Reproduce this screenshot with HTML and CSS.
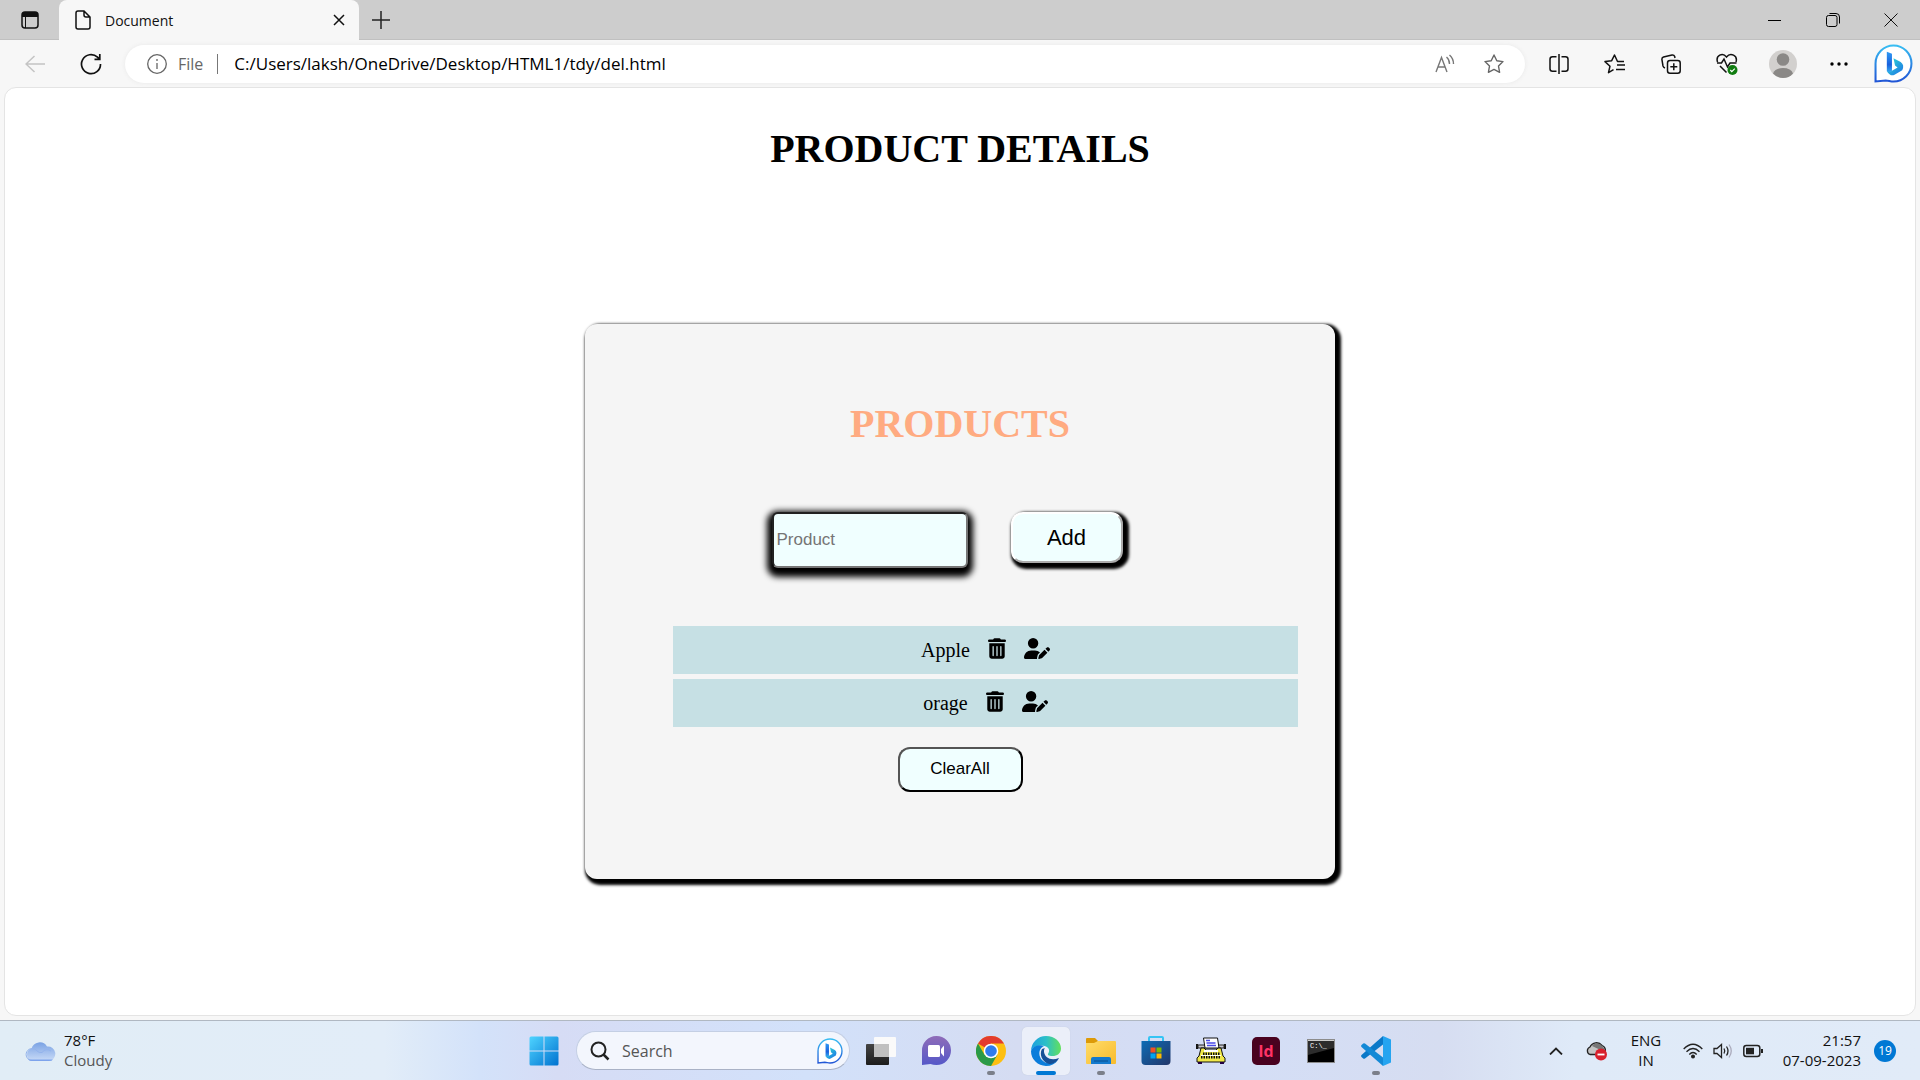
FILE: index.html
```html
<!DOCTYPE html>
<html lang="en">
<head>
<meta charset="utf-8">
<title>Document</title>
<link rel="stylesheet" href="styles.css">
</head>
<body>
<svg class="defs" width="0" height="0" aria-hidden="true">
  <defs>
    <linearGradient id="bingEdge" x1="0" y1="0" x2="0" y2="1"><stop offset="0" stop-color="#38bdf2"/><stop offset="1" stop-color="#2156d6"/></linearGradient>
    <linearGradient id="bingStem" x1="0" y1="0" x2="0" y2="1"><stop offset="0" stop-color="#2f9bf5"/><stop offset=".6" stop-color="#1a60dc"/><stop offset="1" stop-color="#38b6f5"/></linearGradient>
    <linearGradient id="bingBowl" x1="0" y1="0" x2="1" y2="1"><stop offset="0" stop-color="#2fe0d0"/><stop offset="1" stop-color="#1c6fe8"/></linearGradient>
    <linearGradient id="win" x1="0" y1="0" x2="1" y2="1"><stop offset="0" stop-color="#4fd4ff"/><stop offset="1" stop-color="#0072d0"/></linearGradient>
    <linearGradient id="cloud" x1="0" y1="0" x2="0" y2="1"><stop offset="0" stop-color="#7aa2e4"/><stop offset="1" stop-color="#c9dbf7"/></linearGradient>
    <linearGradient id="chat" x1="0" y1="0" x2="0" y2="1"><stop offset="0" stop-color="#8f6cb8"/><stop offset="1" stop-color="#5558c8"/></linearGradient>
    <linearGradient id="edgeTop" x1="0" y1="0" x2="1" y2="0"><stop offset="0" stop-color="#1c9fe0"/><stop offset=".5" stop-color="#2bbfc8"/><stop offset="1" stop-color="#63e05c"/></linearGradient>
    <linearGradient id="folder" x1="0" y1="0" x2="1" y2="1"><stop offset="0" stop-color="#ffdc6a"/><stop offset="1" stop-color="#f8bb2c"/></linearGradient>
    <linearGradient id="store" x1="0" y1="0" x2="1" y2="1"><stop offset="0" stop-color="#0d6cb5"/><stop offset="1" stop-color="#22366a"/></linearGradient>
    <linearGradient id="dark" x1="0" y1="0" x2="0" y2="1"><stop offset="0" stop-color="#444"/><stop offset="1" stop-color="#1c1c1c"/></linearGradient>
    <symbol id="bing" viewBox="0 0 38 38">
      <path d="M1.5 36.5V19A17.5 17.5 0 1 1 19 36.5c-3 0-5-1-7.500-1z" fill="#fff" stroke="url(#bingEdge)" stroke-width="2"/>
      <path d="M12.500 7.500l5 2v16.500l-2.500 2.500-2.500-2z" fill="url(#bingStem)"/>
      <path d="M19 14l7 3.500q4 3 1.500 8L20 30q-4 2-7.500-3.500l2.500 1 8-4.500-2.500-2z" fill="url(#bingBowl)"/>
    </symbol>
    <symbol id="trash" viewBox="0 0 448 512"><path d="M135.200 17.700L128 32H32C14.300 32 0 46.300 0 64S14.300 96 32 96H416c17.700 0 32-14.300 32-32s-14.300-32-32-32H320l-7.200-14.300C307.400 6.800 296.300 0 284.200 0H163.800c-12.100 0-23.200 6.800-28.600 17.700zM416 128H32V448c0 35.300 28.700 64 64 64H352c35.300 0 64-28.700 64-64V128zM144 208V432c0 8.800-7.200 16-16 16s-16-7.200-16-16V208c0-8.800 7.200-16 16-16s16 7.200 16 16zm96 0V432c0 8.800-7.200 16-16 16s-16-7.200-16-16V208c0-8.800 7.200-16 16-16s16 7.200 16 16zm96 0V432c0 8.800-7.200 16-16 16s-16-7.200-16-16V208c0-8.800 7.200-16 16-16s16 7.200 16 16z"/></symbol>
    <symbol id="userpen" viewBox="0 0 640 512"><path d="M224 256A128 128 0 1 0 224 0a128 128 0 1 0 0 256zm-45.700 48C79.800 304 0 383.800 0 482.300C0 498.700 13.300 512 29.700 512H322.800c-3.100-8.800-3.700-18.400-1.400-27.800l15-60.100c2.800-11.300 8.600-21.500 16.800-29.700l40.300-40.300c-32.100-31-75.700-50.100-123.900-50.100H178.300zm435.500-68.300c-15.600-15.600-40.900-15.600-56.600 0l-29.400 29.400 71 71 29.400-29.400c15.600-15.600 15.600-40.900 0-56.600l-14.400-14.400zM375.900 417c-4.100 4.100-7 9.200-8.400 14.900l-15 60.100c-1.400 5.500 .2 11.200 4.200 15.200s9.700 5.600 15.200 4.200l60.100-15c5.600-1.400 10.800-4.300 14.900-8.400L576.100 358.700l-71-71L375.900 417z"/></symbol>
  </defs>
</svg>

<header class="browser">
  <div class="tabstrip">
    <button class="tab-menu" aria-label="Tab actions"><svg width="18" height="18" viewBox="0 0 18 18"><rect x="1" y="1" width="16" height="16" rx="3" fill="none" stroke="#111" stroke-width="1.500"/><path d="M1 6V4q0-3 3-3h10q3 0 3 3v2z" fill="#111"/><path d="M4.500 6v11" stroke="#111"/></svg></button>
    <div class="tab">
      <svg width="16" height="20" viewBox="0 0 16 20" fill="none" stroke="#111" stroke-width="1.500"><path d="M3 1h6l6 6v10q0 2-2 2H3q-2 0-2-2V3q0-2 2-2zM9 1v4q0 2 2 2h4"/></svg>
      <span class="tab-title">Document</span>
      <button class="tab-close" aria-label="Close tab"><svg width="12" height="12" viewBox="0 0 12 12" stroke="#111" stroke-width="1.500"><path d="M1 1l10 10M11 1L1 11"/></svg></button>
    </div>
    <button class="new-tab" aria-label="New tab"><svg width="18" height="18" viewBox="0 0 18 18" stroke="#222" stroke-width="1.500"><path d="M9 0v18M0 9h18"/></svg></button>
    <div class="window-controls">
      <button aria-label="Minimize"><svg width="14" height="14" viewBox="0 0 14 14"><path d="M0 7.500h13" stroke="#000"/></svg></button>
      <button aria-label="Restore"><svg width="14" height="14" viewBox="0 0 14 14" fill="none" stroke="#000"><rect x=".5" y="2.500" width="10.500" height="11" rx="2"/><path d="M3.500 .5H10q3.500 0 3.500 3.500v6.500"/></svg></button>
      <button aria-label="Close"><svg width="14" height="14" viewBox="0 0 14 14" stroke="#111"><path d="M.5.5l13 13M13.500.5l-13 13"/></svg></button>
    </div>
  </div>

  <div class="toolbar">
    <button class="tool" aria-label="Back"><svg width="20" height="18" viewBox="0 0 20 18" fill="none" stroke="#c4c4c4" stroke-width="1.500"><path d="M20 9H1M9.500 1L1 9l8.500 8"/></svg></button>
    <button class="tool" aria-label="Refresh"><svg width="22" height="22" viewBox="0 0 22 22" fill="none" stroke="#111" stroke-width="1.700"><path d="M20.500 11A9.500 9.500 0 1 1 17.500 4.200L19.500 6M19.800 1v5.300h-5.300"/></svg></button>
    <div class="address">
      <svg width="20" height="20" viewBox="0 0 20 20" fill="none" stroke="#666" stroke-width="1.300"><circle cx="10" cy="10" r="9.300"/><path d="M10 9v6M10 5v2"/></svg>
      <span class="scheme">File</span>
      <span class="divider"></span>
      <input class="url" type="text" aria-label="Address" value="C:/Users/laksh/OneDrive/Desktop/HTML1/tdy/del.html">
      <button class="address-tool" aria-label="Read aloud"><svg width="20" height="20" viewBox="0 0 20 20" fill="none" stroke="#777" stroke-width="1.400"><path d="M1 18L6.500 3.500 12 18M3 13h7M11.500 3q3 2.500 3 7M14.500 1q4 3.500 4 9"/></svg></button>
      <button class="address-tool" aria-label="Add to favorites"><svg width="20" height="20" viewBox="0 0 20 20" fill="none" stroke="#666" stroke-width="1.400" stroke-linejoin="round"><path d="M10 1l2.800 5.700 6.200.9-4.500 4.400 1.100 6.300L10 15.400l-5.600 2.900L5.500 12 1 7.600l6.200-.9z"/></svg></button>
    </div>
    <div class="tools">
      <button class="tool" aria-label="Split screen"><svg width="20" height="20" viewBox="0 0 20 20" fill="none" stroke="#111" stroke-width="1.500"><path d="M10 0v20M7.500 2.800H3.500q-2.500 0-2.500 2.500v9.400q0 2.500 2.500 2.500h4M12.500 2.800h4q2.500 0 2.500 2.500v9.400q0 2.500-2.500 2.500h-4"/></svg></button>
      <button class="tool" aria-label="Favorites"><svg width="22" height="20" viewBox="0 0 22 20" fill="none" stroke="#111" stroke-width="1.500" stroke-linejoin="round"><path d="M20 7.500h-6.500L10.500 1 7.700 6.700 1 7.600l5 4.600-1.500 6.500 5-3M13 11h8M12 15.500h9"/></svg></button>
      <button class="tool" aria-label="Collections"><svg width="20" height="20" viewBox="0 0 20 20" fill="none" stroke="#111" stroke-width="1.500"><path d="M4 14Q2.500 13.500 2 12L.9 5.500Q.8 3.500 2.500 3L11 1q2-.3 2.700 1.500L14 4"/><rect x="6.500" y="6.500" width="12.700" height="12.700" rx="2.500"/><path d="M12.800 9.300v7M9.300 12.800h7"/></svg></button>
      <button class="tool" aria-label="Browser essentials"><svg width="22" height="22" viewBox="0 0 22 22" fill="none" stroke="#111" stroke-width="1.500"><path d="M1.500 9C-.5 2.500 6.500-1 10.500 4c4-5 11.500-1.500 9.500 5M4 13l6.500 6.500M1 10h4.500l2.500-4 3.500 8 2.500-4h6.500"/><circle cx="16.500" cy="17" r="5" fill="#107c10" stroke="none"/><path d="M14.300 17l1.500 1.600 3-3" stroke="#fff" stroke-width="1.200"/></svg></button>
      <button class="tool" aria-label="Profile"><svg width="28" height="30" viewBox="0 0 28 30"><circle cx="14" cy="15" r="14" fill="#d2d0ce"/><circle cx="14" cy="10.500" r="6.300" fill="#8a8886"/><path d="M4 24.500q2-5.500 10-5.500t10 5.500q-4 4.500-10 4.500T4 24.500z" fill="#8a8886"/></svg></button>
      <button class="tool" aria-label="Settings and more"><svg width="18" height="4" viewBox="0 0 18 4"><circle cx="2" cy="2" r="1.700"/><circle cx="9" cy="2" r="1.700"/><circle cx="16" cy="2" r="1.700"/></svg></button>
      <button class="tool tool-bing" aria-label="Bing"><svg width="39" height="39"><use href="#bing"/></svg></button>
    </div>
  </div>
</header>

<main class="page">
  <h1>PRODUCT DETAILS</h1>
  <section class="card">
    <h2>PRODUCTS</h2>
    <form class="entry">
      <input class="product-input" type="text" placeholder="Product" aria-label="Product">
      <button class="add" type="button">Add</button>
    </form>
    <ul class="products">
      <li><span>Apple</span><button aria-label="Delete Apple"><svg width="18" height="21"><use href="#trash"/></svg></button><button aria-label="Edit Apple"><svg width="26" height="21"><use href="#userpen"/></svg></button></li>
      <li><span>orage</span><button aria-label="Delete orage"><svg width="18" height="21"><use href="#trash"/></svg></button><button aria-label="Edit orage"><svg width="26" height="21"><use href="#userpen"/></svg></button></li>
    </ul>
    <button class="clear" type="button">ClearAll</button>
  </section>
</main>

<footer class="taskbar">
  <button class="weather">
    <svg width="31" height="22" viewBox="0 0 31 22"><path d="M7 21a6.500 6.500 0 0 1-.5-12.500A8.500 8.500 0 0 1 22 6.500 7.300 7.300 0 0 1 24 21z" fill="url(#cloud)"/><path d="M7 20.500a6 6 0 1 1 5-9.500q2 2 5 1.500 4-5 9-1.500" fill="none" stroke="#93b3ec"/><path d="M3 19.500q2 1.500 4 1.500h17q3 0 4-1.500z" fill="#7da3ec"/></svg>
    <span class="weather-text"><span>78°F</span><span class="muted">Cloudy</span></span>
  </button>

  <nav class="apps" aria-label="Taskbar">
    <button class="app" aria-label="Start"><svg width="30" height="30" viewBox="0 0 30 30"><path fill="url(#win)" d="M2 .5h12.500v14H.5V2Q.5.500 2 .5zM15.500.5H28q1.500 0 1.500 1.500v12.500h-14zM.5 15.500h14v14H2Q.5 29.500.5 28zM15.500 15.500h14V28q0 1.500-1.500 1.500H15.500z"/></svg></button>
    <div class="search">
      <svg width="20" height="20" viewBox="0 0 20 20" fill="none" stroke="#222"><circle cx="8.500" cy="8.500" r="7" stroke-width="2"/><path d="M13.500 13.500l5 5" stroke-width="2.500"/></svg>
      <input type="text" placeholder="Search" aria-label="Search">
      <svg width="26" height="26"><use href="#bing"/></svg>
    </div>
    <button class="app" aria-label="Task view"><svg width="30" height="28" viewBox="0 0 30 28"><rect y="7" width="23" height="21" rx="1" fill="url(#dark)"/><rect x="8" width="22" height="20" rx="1" fill="#fafafa"/><path d="M8 7h15v13H8z" fill="#c0c0c0"/></svg></button>
    <button class="app" aria-label="Chat"><svg width="30" height="30" viewBox="0 0 30 30"><path d="M1 29V15A14.500 14.500 0 1 1 15.500 29q-3.500 0-6-1z" fill="url(#chat)"/><rect x="7" y="9" width="12" height="12" rx="1.500" fill="#fff"/><path d="M20 13l3-3.500v11L20 17z" fill="#fff"/></svg></button>
    <button class="app running" aria-label="Chrome"><svg width="30" height="30" viewBox="0 0 30 30"><circle cx="15" cy="15" r="15" fill="#fdbf11"/><path d="M15 15L2 7.500A15 15 0 0 1 28 7.500H15z" fill="#e33b2e"/><path d="M2 7.500A15 15 0 0 0 15 30l6.500-11.500L15 15 8.500 18.800z" fill="#2a9a48"/><circle cx="15" cy="15" r="7.300" fill="#fff"/><circle cx="15" cy="15" r="5.800" fill="#2f7cec"/></svg></button>
    <button class="app active" aria-label="Edge"><svg width="30" height="30" viewBox="0 0 30 30"><path d="M0 15A15 15 0 0 1 15 0c9 0 15 6 15 12.500 0 5-4 7.500-8.500 7.500-4 0-5.500-1-4-3 1.500-2.500.5-6-4-7C7 8.500 2 11 0 15z" fill="url(#edgeTop)"/><path d="M0 15C2 10 8 8 13 10c-5 2-6 8-3 13 4 5 11 6 17 1-3 4-7 6-12 6A15 15 0 0 1 0 15z" fill="#0b7ddb"/><path d="M11 13c-3 5 0 13 7 15 4 0 8-2 10-6-8 3-14 0-15-6 0-2 0-3 1-4z" fill="#154f97"/></svg></button>
    <button class="app running" aria-label="File Explorer"><svg width="30" height="28" viewBox="0 0 30 28"><path d="M0 10V2q0-1 1-1h8l3 3-4 6z" fill="#dd9a08"/><path d="M0 6h8l4-2h17q1 0 1 1v21q0 1-1 1H1q-1 0-1-1z" fill="url(#folder)"/><path d="M5 27v-5q0-2 2-2h16q2 0 2 2v5z" fill="#1479cd"/><path d="M8 24h14" stroke="#074f8e"/></svg></button>
    <button class="app" aria-label="Microsoft Store"><svg width="30" height="30" viewBox="0 0 30 30"><path d="M8 6V2q0-1 1-1h12q1 0 1 1v4" fill="none" stroke="#35c4f4" stroke-width="2"/><path d="M.5 5h29v20q0 4-4 4h-21q-4 0-4-4z" fill="url(#store)"/><path d="M9.500 11.500h5v5h-5z" fill="#f25022"/><path d="M15.500 11.500h5v5h-5z" fill="#7fba00"/><path d="M9.500 17.500h5v5h-5z" fill="#00a4ef"/><path d="M15.500 17.500h5v5h-5z" fill="#ffb900"/></svg></button>
    <button class="app" aria-label="Typewriter"><svg width="30" height="27" viewBox="0 0 30 27"><path d="M1 7v5M29 7v5" stroke="#111" stroke-width="2"/><path d="M2 8h26v3H2z" fill="#c8c8d0" stroke="#222"/><path d="M7.500 1h14l1.500 10H9z" fill="#fff" stroke="#111"/><path d="M10 3.500h4M10.500 6h9M11 8.500h9" stroke="#4a4ae6" stroke-width="1.300"/><path d="M5 11h3l2 2h10l2-2h3l2 8 2 2v4H1v-4l2-2z" fill="#f0e84a" stroke="#111"/><path d="M8 14h14" stroke="#fff" stroke-width="2"/><path d="M7 17h17M5 20h20" stroke="#111" stroke-width="3" stroke-dasharray="1.500 1"/><path d="M5 18.500h20" stroke="#fff"/><path d="M2 26h4M24 26h4" stroke="#204" stroke-width="2"/></svg></button>
    <button class="app" aria-label="InDesign"><svg width="28" height="28" viewBox="0 0 28 28"><rect width="28" height="28" rx="5" fill="#49021f"/><text x="14" y="20" class="id-glyph">Id</text></svg></button>
    <button class="app" aria-label="Command Prompt"><svg width="28" height="24" viewBox="0 0 28 24"><rect x=".5" y=".5" width="27" height="23" fill="#000" stroke="#8c8c8c"/><path d="M1 1h26v8L1 16z" fill="#2c2c2c"/><path d="M1 1.500h26" stroke="#ccc"/><text x="3" y="9" class="cmd-glyph">C:\_</text></svg></button>
    <button class="app running" aria-label="Visual Studio Code"><svg width="30" height="30" viewBox="0 0 30 30"><path d="M22 0l8 3.500v23L22 30z" fill="#25a4f0"/><path d="M22 0v8.500L4 22.500q-1 .7-1.800 0L.5 21q-.8-1 0-2z" fill="#0a78c8"/><path d="M22 30v-8.500L4 7.500q-1-.7-1.800 0L.5 9q-.8 1 0 2z" fill="#1389d6"/></svg></button>
  </nav>

  <div class="tray">
    <button class="tray-chevron" aria-label="Show hidden icons"><svg width="14" height="8" viewBox="0 0 14 8" fill="none" stroke="#222" stroke-width="1.800"><path d="M1 7.500l6-6 6 6"/></svg></button>
    <button class="tray-cloud" aria-label="OneDrive"><svg width="22" height="20" viewBox="0 0 22 20"><path d="M4 13.500a4 4 0 0 1 0-7.500 7 7 0 0 1 12-1.500 5 5 0 0 1 1 9z" fill="#c4c4c4" stroke="#222" stroke-width="1.300"/><path d="M6 5a6 6 0 0 1 10 0q3 2 3 6z" fill="#777"/><circle cx="15" cy="13.500" r="6" fill="#d9202c"/><path d="M11.500 13.500h7" stroke="#fff" stroke-width="1.800"/></svg></button>
    <button class="language"><span>ENG</span><span>IN</span></button>
    <button class="status" aria-label="Network, volume and battery">
      <svg width="20" height="16" viewBox="0 0 20 16" fill="none" stroke="#222" stroke-width="1.400"><path d="M.7 6q9.300-9.500 18.600 0M3.500 8.700q6.500-6.500 13 0M6.300 11.400q3.700-3.700 7.400 0"/><circle cx="10" cy="13.500" r="1.300" fill="#222"/></svg>
      <svg width="20" height="16" viewBox="0 0 20 16" fill="none" stroke="#222" stroke-width="1.300"><path d="M1 5.500h3L8.500 1.500v13L4 10.500H1zM11 5.500q1.500 2.500 0 5M13.500 3.500q3 4.500 0 9"/><path d="M16 1.500q4.500 6.500 0 13" stroke="#aab"/></svg>
      <svg width="20" height="14" viewBox="0 0 20 14"><rect x=".8" y="1.500" width="16" height="11" rx="2.500" fill="none" stroke="#222" stroke-width="1.500"/><rect x="3" y="3.800" width="8" height="6.500" fill="#222"/><path d="M18 5h2v4h-2z" fill="#222"/></svg>
    </button>
    <button class="clock"><span>21:57</span><span>07-09-2023</span></button>
    <button class="badge">19</button>
  </div>
</footer>
</body>
</html>
```
FILE: styles.css
```css
* { box-sizing: border-box; }

body {
  margin: 0;
  min-height: 100vh;
  display: flex;
  flex-direction: column;
  background: #f7f7f7;
  font-family: "Open Sans", "Noto Sans", sans-serif;
  font-size: 14px;
  color: #111;
}

.defs { position: absolute; }

button {
  margin: 0;
  padding: 0;
  border: 0;
  background: none;
  color: inherit;
  font: inherit;
}

svg { display: block; flex: none; }

input { min-width: 0; outline: 0; }

/* Tab strip */
.tabstrip {
  display: flex;
  height: 40px;
  background: #cdcdcd;
  border-bottom: 1px solid #c0c0c0;
}

.tab-menu, .new-tab, .tab-close {
  display: flex;
  align-items: center;
  justify-content: center;
}

.tab-menu { width: 59px; }

.new-tab { width: 43px; }

.tab {
  display: flex;
  align-items: center;
  gap: 14px;
  width: 300px;
  height: 40px;
  padding: 0 8px 0 16px;
  border-radius: 8px 8px 0 0;
  background: #f7f7f7;
}

.tab-title { flex: 1; }

.tab-close { width: 24px; height: 24px; }

.window-controls { display: flex; margin-left: auto; }

.window-controls button {
  display: flex;
  align-items: center;
  justify-content: center;
  width: 58px;
}

/* Toolbar */
.toolbar {
  display: flex;
  align-items: center;
  gap: 6px;
  height: 47px;
  padding-left: 7px;
}

.tool {
  display: flex;
  align-items: center;
  justify-content: center;
  width: 56px;
  height: 40px;
}

.toolbar > .tool + .tool { margin-left: -6px; }

.tool-bing { width: 53px; }

.tools { display: flex; }

.address {
  display: flex;
  align-items: center;
  flex: 1;
  height: 38px;
  padding: 0 7px 0 22px;
  border-radius: 19px;
  background: #fff;
  box-shadow: 0 0 4px #e8e8e8;
}

.scheme {
  margin-left: 11px;
  font-size: 16px;
  color: #666;
}

.divider {
  width: 1px;
  height: 20px;
  margin: 0 16px 0 14px;
  background: #777;
}

.url {
  flex: 1;
  padding: 0;
  border: 0;
  background: none;
  font: inherit;
  font-size: 17px;
  color: #000;
}

.address-tool {
  display: flex;
  align-items: center;
  justify-content: center;
  width: 49px;
}

/* Web page */
.page {
  flex: 1;
  margin: 0 4px 4px;
  padding: 38px 0 135px;
  border: 1px solid #e4e4e4;
  border-radius: 12px;
  background: #fff;
  font-family: "Liberation Serif", "Times New Roman", serif;
  font-size: 20px;
  color: #000;
}

.page h1, .page h2 {
  margin: 0;
  font-size: 40px;
  line-height: 46px;
  text-align: center;
}

.card {
  display: flex;
  flex-direction: column;
  align-items: center;
  max-width: 750px;
  margin: 152px auto 0;
  padding: 77px 37px 87px;
  border-radius: 12px;
  background: #f5f5f5;
  box-shadow: 3px 3px 3px 3px #000;
}

.card h2 { color: #ffab81; }

.entry {
  display: flex;
  align-items: flex-start;
  gap: 43px;
  margin: 65px 0 58px;
  padding-right: 26px;
}

.product-input {
  width: 196px;
  height: 56px;
  padding: 0 3px;
  border: 2px inset #767676;
  border-radius: 6px;
  background: #f0ffff;
  box-shadow: 0 4px 6px 5px #000;
  font-family: "Liberation Sans", Arial, sans-serif;
  font-size: 17px;
}

.product-input::placeholder { color: #757575; }

.add, .clear {
  background: #f0ffff;
  font-family: "Liberation Sans", Arial, sans-serif;
}

.add {
  width: 112px;
  height: 51px;
  border: 2px outset #fff;
  border-radius: 12px;
  box-shadow: 3px 3px 3px 3px #000;
  font-size: 22px;
}

.products {
  display: flex;
  flex-direction: column;
  gap: 5px;
  align-self: stretch;
  margin: 0 0 20px 51px;
  padding: 0;
  list-style: none;
}

.products li {
  display: flex;
  align-items: center;
  justify-content: center;
  gap: 18px;
  height: 48px;
  background: #c6e0e4;
}

.products button { padding-bottom: 4px; }

.clear {
  width: 125px;
  height: 45px;
  padding-bottom: 2px;
  border: 2px outset #000;
  border-radius: 12px;
  font-size: 17px;
}

/* Taskbar */
.taskbar {
  display: grid;
  grid-template-columns: 1fr auto 1fr;
  align-items: center;
  height: 60px;
  border-top: 1px solid #b0b8c2;
  background: linear-gradient(90deg, #e1edf6, #e2edf8 20%, #d3e2fa 25%, #d6dcf5 29%, #d2e1fa 42%, #d5dcf2 53%, #d4def6 65%, #d6ddf1 75%, #dfeaf8 82%, #e1ebf8);
}

.weather {
  display: flex;
  align-items: center;
  justify-self: start;
  gap: 8px;
  padding-left: 25px;
  text-align: left;
}

.weather-text, .language, .clock {
  display: flex;
  flex-direction: column;
  padding-bottom: 2px;
  font-size: 15px;
  line-height: 20px;
}

.muted { color: #555; }

.apps {
  display: flex;
  align-items: center;
  gap: 7px;
}

.app {
  position: relative;
  display: flex;
  align-items: center;
  justify-content: center;
  width: 48px;
  height: 48px;
  border-radius: 5px;
}

.app.active {
  background: #ebeff9;
  box-shadow: 0 0 1px #b8c0d0;
}

.app.running::after, .app.active::after {
  content: "";
  position: absolute;
  bottom: 0;
  width: 8px;
  height: 4px;
  border-radius: 2px;
  background: #7b7f8a;
}

.app.active::after { width: 20px; background: #0078d4; }

.search {
  display: flex;
  align-items: center;
  width: 274px;
  height: 39px;
  margin-left: 1px;
  padding: 0 6px 0 13px;
  border: 1px solid #c4cfe4;
  border-bottom-color: #a9b2c6;
  border-radius: 20px;
  background: #f3f6fd;
}

.search input {
  flex: 1;
  padding: 0 12px;
  border: 0;
  background: none;
  font: inherit;
  font-size: 16px;
}

.search input::placeholder { color: #555; }

.id-glyph {
  font-size: 16px;
  font-weight: 700;
  text-anchor: middle;
  fill: #ff3366;
}

.cmd-glyph {
  font-family: "Liberation Mono", monospace;
  font-size: 7px;
  fill: #fff;
}

.tray {
  display: flex;
  align-items: center;
  justify-self: end;
  padding-right: 24px;
}

.tray-cloud { margin: 0 23px; }

.language { align-items: center; width: 30px; }

.status {
  display: flex;
  align-items: center;
  gap: 10px;
  margin: 0 16px 0 22px;
}

.clock { align-items: flex-end; width: 82px; }

.badge {
  width: 22px;
  height: 22px;
  margin-left: 13px;
  border-radius: 50%;
  background: #0078d4;
  color: #fff;
  font-size: 12px;
}
```
